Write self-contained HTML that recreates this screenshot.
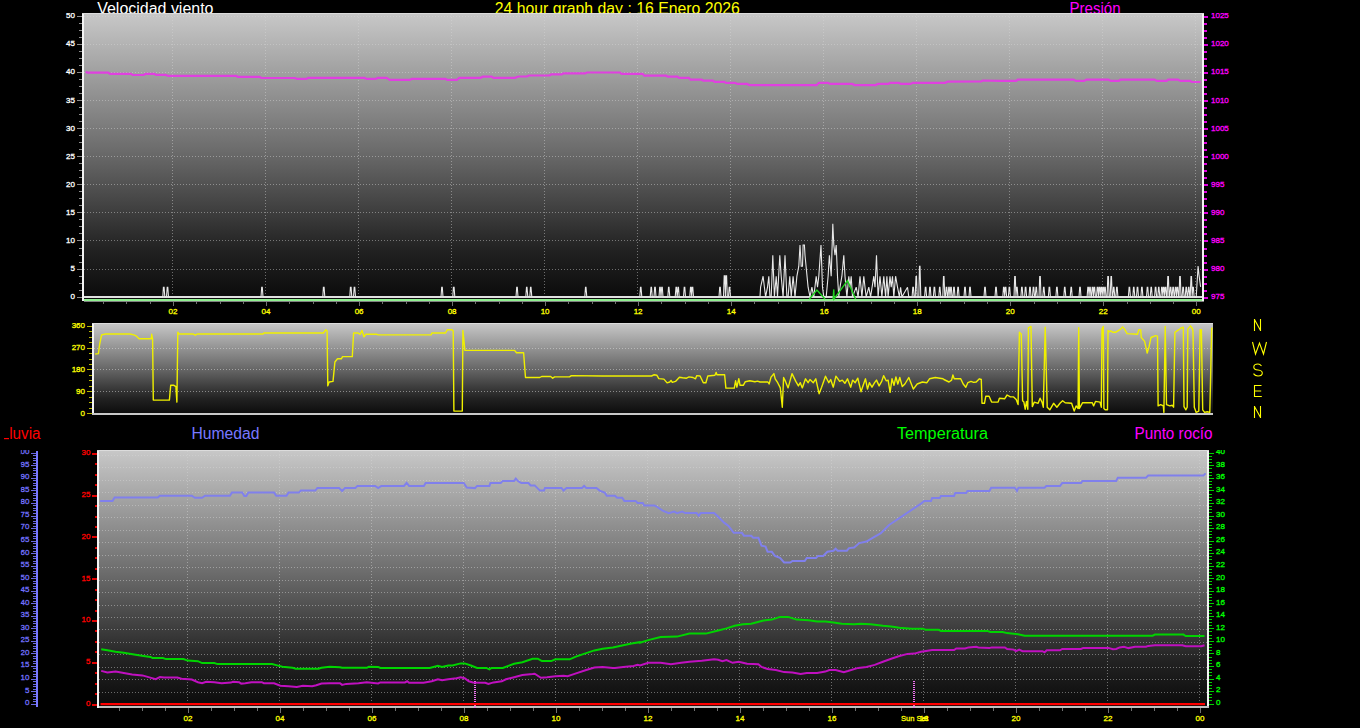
<!DOCTYPE html>
<html><head><meta charset="utf-8"><style>
html,body{margin:0;padding:0;background:#000;width:1360px;height:728px;overflow:hidden}
svg{display:block}
</style></head><body>
<svg width="1360" height="728" viewBox="0 0 1360 728">
<defs>
<linearGradient id="g1" x1="0" y1="0" x2="0" y2="1">
<stop offset="0" stop-color="#c8c8c8"/>
<stop offset="0.475" stop-color="#6c6c6c"/>
<stop offset="0.82" stop-color="#222222"/>
<stop offset="1" stop-color="#0a0a0a"/>
</linearGradient>
<clipPath id="clipB"><rect x="20.5" y="450" width="30" height="280"/></clipPath>
<clipPath id="clipT"><rect x="0" y="13" width="1360" height="300"/></clipPath>
<clipPath id="clipM"><rect x="0" y="323" width="1360" height="100"/></clipPath>
<clipPath id="clipBt"><rect x="0" y="450" width="1360" height="278"/></clipPath>
</defs>
<text x="97.2" y="13.8" fill="#ffffff" font-size="16" textLength="116.3" lengthAdjust="spacingAndGlyphs" font-family="'Liberation Sans', sans-serif" >Velocidad viento</text>
<text x="494.8" y="13.8" fill="#ffff00" font-size="16" textLength="244.99999999999994" lengthAdjust="spacingAndGlyphs" font-family="'Liberation Sans', sans-serif" >24 hour graph day : 16 Enero 2026</text>
<text x="1069.5" y="13.8" fill="#ff00ff" font-size="16" textLength="51.0" lengthAdjust="spacingAndGlyphs" font-family="'Liberation Sans', sans-serif" >Presión</text>
<rect x="82" y="13" width="1122" height="288" fill="url(#g1)"/>
<path d="M84 269.5H1202 M84 240.5H1202 M84 212.5H1202 M84 184.5H1202 M84 156.5H1202 M84 128.5H1202 M84 100.5H1202 M84 72.5H1202 M84 44.5H1202 M84 16.5H1202" stroke="#d8d8d8" stroke-width="1" stroke-dasharray="1 2" opacity="0.45" shape-rendering="crispEdges"/>
<path d="M172.5 14V298 M265.5 14V298 M358.5 14V298 M451.5 14V298 M544.5 14V298 M637.5 14V298 M730.5 14V298 M823.5 14V298 M916.5 14V298 M1009.5 14V298 M1102.5 14V298 M1195.5 14V298" stroke="#d8d8d8" stroke-width="1" stroke-dasharray="1 2" opacity="0.45" shape-rendering="crispEdges"/>
<rect x="82" y="13" width="2" height="288" fill="#f4f4f4"/>
<rect x="1202" y="13" width="2" height="288" fill="#f4f4f4"/>
<rect x="82" y="13" width="1122" height="1" fill="#dcdcdc"/>
<path d="M77 297.5H82 M79 290.5H82 M79 283.5H82 M79 276.5H82 M77 269.5H82 M79 262.5H82 M79 255.5H82 M79 248.5H82 M77 240.5H82 M79 233.5H82 M79 226.5H82 M79 219.5H82 M77 212.5H82 M79 205.5H82 M79 198.5H82 M79 191.5H82 M77 184.5H82 M79 177.5H82 M79 170.5H82 M79 163.5H82 M77 156.5H82 M79 149.5H82 M79 142.5H82 M79 135.5H82 M77 128.5H82 M79 121.5H82 M79 114.5H82 M79 107.5H82 M77 100.5H82 M79 93.5H82 M79 86.5H82 M79 79.5H82 M77 72.5H82 M79 65.5H82 M79 58.5H82 M79 51.5H82 M77 44.5H82 M79 37.5H82 M79 30.5H82 M79 23.5H82 M77 16.5H82" stroke="#8c8c8c" stroke-width="1" shape-rendering="crispEdges"/>
<path d="M1204 297.5H1208 M1204 290.5H1206.5 M1204 283.5H1206.5 M1204 276.5H1206.5 M1204 269.5H1208 M1204 262.5H1206.5 M1204 255.5H1206.5 M1204 248.5H1206.5 M1204 240.5H1208 M1204 233.5H1206.5 M1204 226.5H1206.5 M1204 219.5H1206.5 M1204 212.5H1208 M1204 205.5H1206.5 M1204 198.5H1206.5 M1204 191.5H1206.5 M1204 184.5H1208 M1204 177.5H1206.5 M1204 170.5H1206.5 M1204 163.5H1206.5 M1204 156.5H1208 M1204 149.5H1206.5 M1204 142.5H1206.5 M1204 135.5H1206.5 M1204 128.5H1208 M1204 121.5H1206.5 M1204 114.5H1206.5 M1204 107.5H1206.5 M1204 100.5H1208 M1204 93.5H1206.5 M1204 86.5H1206.5 M1204 79.5H1206.5 M1204 72.5H1208 M1204 65.5H1206.5 M1204 58.5H1206.5 M1204 51.5H1206.5 M1204 44.5H1208 M1204 37.5H1206.5 M1204 30.5H1206.5 M1204 23.5H1206.5 M1204 16.5H1208" stroke="#e000e0" stroke-width="2" shape-rendering="crispEdges"/>
<g clip-path="url(#clipT)">
<text x="75" y="299.2" fill="#ffffff" stroke="#ffffff" stroke-width="0.3" font-size="8" text-anchor="end" font-family="'Liberation Sans', sans-serif">0</text>
<text x="75" y="271.1" fill="#ffffff" stroke="#ffffff" stroke-width="0.3" font-size="8" text-anchor="end" font-family="'Liberation Sans', sans-serif">5</text>
<text x="75" y="243.0" fill="#ffffff" stroke="#ffffff" stroke-width="0.3" font-size="8" text-anchor="end" font-family="'Liberation Sans', sans-serif">10</text>
<text x="75" y="214.9" fill="#ffffff" stroke="#ffffff" stroke-width="0.3" font-size="8" text-anchor="end" font-family="'Liberation Sans', sans-serif">15</text>
<text x="75" y="186.8" fill="#ffffff" stroke="#ffffff" stroke-width="0.3" font-size="8" text-anchor="end" font-family="'Liberation Sans', sans-serif">20</text>
<text x="75" y="158.7" fill="#ffffff" stroke="#ffffff" stroke-width="0.3" font-size="8" text-anchor="end" font-family="'Liberation Sans', sans-serif">25</text>
<text x="75" y="130.6" fill="#ffffff" stroke="#ffffff" stroke-width="0.3" font-size="8" text-anchor="end" font-family="'Liberation Sans', sans-serif">30</text>
<text x="75" y="102.5" fill="#ffffff" stroke="#ffffff" stroke-width="0.3" font-size="8" text-anchor="end" font-family="'Liberation Sans', sans-serif">35</text>
<text x="75" y="74.4" fill="#ffffff" stroke="#ffffff" stroke-width="0.3" font-size="8" text-anchor="end" font-family="'Liberation Sans', sans-serif">40</text>
<text x="75" y="46.3" fill="#ffffff" stroke="#ffffff" stroke-width="0.3" font-size="8" text-anchor="end" font-family="'Liberation Sans', sans-serif">45</text>
<text x="75" y="18.2" fill="#ffffff" stroke="#ffffff" stroke-width="0.3" font-size="8" text-anchor="end" font-family="'Liberation Sans', sans-serif">50</text>
<text x="1211" y="299.2" fill="#ff00ff" stroke="#ff00ff" stroke-width="0.3" font-size="8" font-family="'Liberation Sans', sans-serif">975</text>
<text x="1211" y="271.1" fill="#ff00ff" stroke="#ff00ff" stroke-width="0.3" font-size="8" font-family="'Liberation Sans', sans-serif">980</text>
<text x="1211" y="243.0" fill="#ff00ff" stroke="#ff00ff" stroke-width="0.3" font-size="8" font-family="'Liberation Sans', sans-serif">985</text>
<text x="1211" y="214.9" fill="#ff00ff" stroke="#ff00ff" stroke-width="0.3" font-size="8" font-family="'Liberation Sans', sans-serif">990</text>
<text x="1211" y="186.8" fill="#ff00ff" stroke="#ff00ff" stroke-width="0.3" font-size="8" font-family="'Liberation Sans', sans-serif">995</text>
<text x="1211" y="158.7" fill="#ff00ff" stroke="#ff00ff" stroke-width="0.3" font-size="8" font-family="'Liberation Sans', sans-serif">1000</text>
<text x="1211" y="130.6" fill="#ff00ff" stroke="#ff00ff" stroke-width="0.3" font-size="8" font-family="'Liberation Sans', sans-serif">1005</text>
<text x="1211" y="102.5" fill="#ff00ff" stroke="#ff00ff" stroke-width="0.3" font-size="8" font-family="'Liberation Sans', sans-serif">1010</text>
<text x="1211" y="74.4" fill="#ff00ff" stroke="#ff00ff" stroke-width="0.3" font-size="8" font-family="'Liberation Sans', sans-serif">1015</text>
<text x="1211" y="46.3" fill="#ff00ff" stroke="#ff00ff" stroke-width="0.3" font-size="8" font-family="'Liberation Sans', sans-serif">1020</text>
<text x="1211" y="18.2" fill="#ff00ff" stroke="#ff00ff" stroke-width="0.3" font-size="8" font-family="'Liberation Sans', sans-serif">1025</text>
</g>
<path d="M103.5 301v3 M126.5 301v3 M150.5 301v3 M173.5 301v5 M196.5 301v3 M220.5 301v3 M243.5 301v3 M266.5 301v5 M289.5 301v3 M313.5 301v3 M336.5 301v3 M359.5 301v5 M382.5 301v3 M406.5 301v3 M429.5 301v3 M452.5 301v5 M475.5 301v3 M499.5 301v3 M522.5 301v3 M545.5 301v5 M568.5 301v3 M592.5 301v3 M615.5 301v3 M638.5 301v5 M661.5 301v3 M685.5 301v3 M708.5 301v3 M731.5 301v5 M754.5 301v3 M778.5 301v3 M801.5 301v3 M824.5 301v5 M847.5 301v3 M871.5 301v3 M894.5 301v3 M917.5 301v5 M940.5 301v3 M964.5 301v3 M987.5 301v3 M1010.5 301v5 M1034.5 301v3 M1057.5 301v3 M1080.5 301v3 M1103.5 301v5 M1127.5 301v3 M1150.5 301v3 M1173.5 301v3 M1196.5 301v5" stroke="#707070" stroke-width="1" shape-rendering="crispEdges"/>
<text x="173.0" y="314" fill="#ffff00" stroke="#ffff00" stroke-width="0.3" font-size="8" text-anchor="middle" font-family="'Liberation Sans', sans-serif">02</text>
<text x="266.0" y="314" fill="#ffff00" stroke="#ffff00" stroke-width="0.3" font-size="8" text-anchor="middle" font-family="'Liberation Sans', sans-serif">04</text>
<text x="359.1" y="314" fill="#ffff00" stroke="#ffff00" stroke-width="0.3" font-size="8" text-anchor="middle" font-family="'Liberation Sans', sans-serif">06</text>
<text x="452.1" y="314" fill="#ffff00" stroke="#ffff00" stroke-width="0.3" font-size="8" text-anchor="middle" font-family="'Liberation Sans', sans-serif">08</text>
<text x="545.1" y="314" fill="#ffff00" stroke="#ffff00" stroke-width="0.3" font-size="8" text-anchor="middle" font-family="'Liberation Sans', sans-serif">10</text>
<text x="638.1" y="314" fill="#ffff00" stroke="#ffff00" stroke-width="0.3" font-size="8" text-anchor="middle" font-family="'Liberation Sans', sans-serif">12</text>
<text x="731.2" y="314" fill="#ffff00" stroke="#ffff00" stroke-width="0.3" font-size="8" text-anchor="middle" font-family="'Liberation Sans', sans-serif">14</text>
<text x="824.2" y="314" fill="#ffff00" stroke="#ffff00" stroke-width="0.3" font-size="8" text-anchor="middle" font-family="'Liberation Sans', sans-serif">16</text>
<text x="917.2" y="314" fill="#ffff00" stroke="#ffff00" stroke-width="0.3" font-size="8" text-anchor="middle" font-family="'Liberation Sans', sans-serif">18</text>
<text x="1010.3" y="314" fill="#ffff00" stroke="#ffff00" stroke-width="0.3" font-size="8" text-anchor="middle" font-family="'Liberation Sans', sans-serif">20</text>
<text x="1103.3" y="314" fill="#ffff00" stroke="#ffff00" stroke-width="0.3" font-size="8" text-anchor="middle" font-family="'Liberation Sans', sans-serif">22</text>
<text x="1196.3" y="314" fill="#ffff00" stroke="#ffff00" stroke-width="0.3" font-size="8" text-anchor="middle" font-family="'Liberation Sans', sans-serif">00</text>
<polyline points="85.7,71.6 87.3,72.6 108.3,72.6 109.9,73.9 131.0,73.9 132.6,75.0 143.9,75.0 145.5,73.8 154.4,73.8 156.0,74.9 165.7,74.9 168.2,75.9 236.1,75.9 237.7,76.8 259.6,76.8 261.2,78.0 295.1,78.0 296.8,78.9 306.5,78.9 308.1,77.8 364.7,77.8 366.3,78.9 376.0,78.9 377.6,77.8 386.5,77.8 389.8,79.9 410.0,79.9 411.6,78.9 445.6,78.9 447.2,79.9 456.9,79.9 459.3,77.8 480.4,77.8 482.8,76.7 491.7,76.7 493.3,77.8 515.1,77.8 517.6,76.7 518.9,76.5 527.0,76.5 528.6,75.5 549.6,75.5 551.2,74.4 561.8,74.4 563.4,73.4 585.2,73.4 586.8,72.5 620.0,72.5 621.6,73.8 642.6,73.8 644.3,75.7 666.1,75.7 667.7,76.7 677.4,76.7 679.0,77.8 688.8,77.8 690.4,79.7 701.7,79.7 703.3,80.7 713.0,80.7 714.6,81.8 724.3,81.8 726.0,83.0 730.8,82.8 734.9,82.8 737.3,83.9 747.0,83.9 749.4,85.1 816.5,85.1 819.0,82.8 827.9,82.8 830.3,83.9 852.1,83.9 854.6,85.1 875.6,85.1 878.0,83.9 888.5,83.9 890.1,82.8 899.0,82.8 900.7,83.9 910.4,83.9 912.8,82.8 945.1,82.8 947.6,81.7 981.2,81.5 982.5,80.5 1000.0,80.9 1016.2,80.9 1017.8,79.6 1073.6,79.6 1076.0,80.9 1084.1,80.9 1086.5,79.6 1108.4,79.6 1110.8,80.9 1118.9,80.9 1120.5,79.6 1154.5,79.6 1156.9,80.9 1166.6,80.9 1168.2,79.6 1177.9,79.6 1180.4,80.9 1190.1,80.9 1191.7,82.0 1200.6,82.0" fill="none" stroke="#e040e0" stroke-width="2.2"/>
<rect x="84" y="299" width="1118" height="2" fill="#90f090"/>
<rect x="84" y="296" width="1118" height="2" fill="#d8d8d8"/>
<polyline points="84.0,297.0 162.8,297.0 163.4,287.3 164.1,287.3 164.8,297.0 166.5,297.0 167.2,287.3 167.8,287.3 168.5,297.0 261.0,297.0 261.7,287.3 262.3,287.3 263.0,297.0 322.8,297.0 323.4,287.3 324.1,287.3 324.8,297.0 349.8,297.0 350.4,287.3 351.1,287.3 351.8,297.0 353.5,297.0 354.2,287.3 354.8,287.3 355.5,297.0 441.0,297.0 441.7,287.3 442.3,287.3 443.0,297.0 452.8,297.0 453.4,287.3 454.1,287.3 454.8,297.0 516.0,297.0 516.7,287.3 517.3,287.3 518.0,297.0 525.8,297.0 526.5,287.3 527.0,287.3 527.8,297.0 529.8,297.0 530.5,287.3 531.0,287.3 531.8,297.0 584.8,297.0 585.5,287.3 586.0,287.3 586.8,297.0 639.8,297.0 640.5,287.3 641.0,287.3 641.8,297.0 650.2,297.0 651.0,287.3 651.5,287.3 652.2,297.0 654.0,297.0 654.7,287.3 655.3,287.3 656.0,297.0 659.0,297.0 659.7,287.3 660.3,287.3 661.0,297.0 661.0,297.0 661.7,287.3 662.3,287.3 663.0,297.0 667.8,297.0 668.5,287.3 669.0,287.3 669.8,297.0 675.2,297.0 676.0,287.3 676.5,287.3 677.2,297.0 677.2,297.0 678.0,287.3 678.5,287.3 679.2,297.0 683.5,297.0 684.2,287.3 684.8,287.3 685.5,297.0 689.8,297.0 690.5,287.3 691.0,287.3 691.8,297.0 691.5,297.0 692.2,287.3 692.8,287.3 693.5,297.0 719.0,297.0 719.7,287.3 720.3,287.3 721.0,297.0 723.5,297.0 724.2,275.8 724.8,275.8 725.5,297.0 725.3,297.0 726.0,275.8 726.6,275.8 727.3,297.0 728.5,297.0 729.2,287.3 729.8,287.3 730.5,297.0 760.0,296.9 760.6,287.2 763.1,276.2 764.4,287.2 765.6,296.9 767.5,287.2 768.8,276.2 770.0,296.9 771.2,296.9 772.8,255.2 774.4,296.9 776.2,276.2 777.5,296.9 779.8,255.2 781.2,276.2 783.1,296.9 785.0,255.2 786.9,296.9 788.1,296.9 789.8,276.2 791.2,296.9 793.1,276.2 795.0,296.9 796.9,276.2 798.8,266.2 800.0,245.0 801.2,266.2 802.5,266.2 803.1,245.0 804.4,245.0 805.0,255.2 808.1,287.2 810.0,296.9 811.9,287.2 813.8,296.9 816.2,276.2 817.5,287.2 818.8,276.2 821.0,245.0 822.5,287.2 823.8,296.9 826.2,296.9 828.1,276.2 829.4,255.2 831.2,276.2 832.8,223.8 833.8,245.0 835.0,255.2 836.2,245.0 837.5,276.2 838.8,296.9 840.0,287.2 841.9,276.2 843.8,255.2 845.0,276.2 846.9,296.9 848.8,276.2 850.0,287.2 851.2,276.2 852.5,296.9 856.2,287.2 858.1,296.9 860.0,276.2 861.9,296.9 863.8,276.2 865.0,287.2 866.2,296.9 868.8,287.2 870.6,296.9 873.8,276.2 875.0,287.2 876.5,255.2 878.1,296.9 880.0,276.2 881.9,296.9 883.8,276.2 885.6,296.9 886.9,276.2 888.1,296.9 890.0,276.2 891.2,287.2 892.5,276.2 893.8,296.9 895.6,276.2 897.5,287.2 899.4,296.9 900.6,287.2 901.9,296.9 907.5,287.2 908.8,296.9 912.1,297.0 912.8,287.2 913.4,287.2 914.1,297.0 915.2,297.0 916.0,276.6 916.5,276.6 917.2,297.0 918.8,297.0 919.5,266.3 920.0,266.3 920.8,297.0 924.6,297.0 925.3,287.2 925.9,287.2 926.6,297.0 929.0,297.0 929.7,287.2 930.3,287.2 931.0,297.0 933.4,297.0 934.1,287.2 934.7,287.2 935.4,297.0 938.8,297.0 939.5,287.2 940.0,287.2 940.8,297.0 942.8,297.0 943.5,276.6 944.0,276.6 944.8,297.0 945.5,297.0 946.2,287.2 946.8,287.2 947.5,297.0 948.0,297.0 948.7,287.2 949.3,287.2 950.0,297.0 950.0,297.0 950.7,287.2 951.3,287.2 952.0,297.0 953.0,297.0 953.7,287.2 954.3,287.2 955.0,297.0 957.1,297.0 957.8,287.2 958.4,287.2 959.1,297.0 964.0,297.0 964.7,287.2 965.3,287.2 966.0,297.0 969.0,297.0 969.7,287.2 970.3,287.2 971.0,297.0 984.0,297.0 984.7,287.2 985.3,287.2 986.0,297.0 995.0,297.0 995.7,287.2 996.3,287.2 997.0,297.0 1002.8,297.0 1003.5,287.2 1004.0,287.2 1004.8,297.0 1004.6,297.0 1005.3,287.2 1005.9,287.2 1006.6,297.0 1008.4,297.0 1009.1,287.2 1009.7,287.2 1010.4,297.0 1014.0,297.0 1014.7,276.6 1015.3,276.6 1016.0,297.0 1015.9,297.0 1016.6,287.2 1017.2,287.2 1017.9,297.0 1020.9,297.0 1021.6,287.2 1022.2,287.2 1022.9,297.0 1024.6,297.0 1025.3,287.2 1025.9,287.2 1026.6,297.0 1029.0,297.0 1029.7,287.2 1030.3,287.2 1031.0,297.0 1032.5,297.0 1033.2,287.2 1033.8,287.2 1034.5,297.0 1035.2,297.0 1036.0,287.2 1036.5,287.2 1037.2,297.0 1039.0,297.0 1039.7,276.6 1040.3,276.6 1041.0,297.0 1042.8,297.0 1043.5,287.2 1044.0,287.2 1044.8,297.0 1048.4,297.0 1049.1,287.2 1049.7,287.2 1050.4,297.0 1055.9,297.0 1056.6,287.2 1057.2,287.2 1057.9,297.0 1063.8,297.0 1064.5,287.2 1065.0,287.2 1065.8,297.0 1070.2,297.0 1071.0,287.2 1071.5,287.2 1072.2,297.0 1079.0,297.0 1079.7,287.2 1080.3,287.2 1081.0,297.0 1087.1,297.0 1087.8,287.2 1088.4,287.2 1089.1,297.0 1089.0,297.0 1089.7,287.2 1090.3,287.2 1091.0,297.0 1091.5,297.0 1092.2,287.2 1092.8,287.2 1093.5,297.0 1093.4,297.0 1094.1,287.2 1094.7,287.2 1095.4,297.0 1096.5,297.0 1097.2,287.2 1097.8,287.2 1098.5,297.0 1098.4,297.0 1099.1,287.2 1099.7,287.2 1100.4,297.0 1100.2,297.0 1101.0,287.2 1101.5,287.2 1102.2,297.0 1102.1,297.0 1102.8,287.2 1103.4,287.2 1104.1,297.0 1104.0,297.0 1104.7,287.2 1105.3,287.2 1106.0,297.0 1107.1,297.0 1107.8,276.6 1108.4,276.6 1109.1,297.0 1110.2,297.0 1111.0,276.6 1111.5,276.6 1112.2,297.0 1112.8,297.0 1113.5,287.2 1114.0,287.2 1114.8,297.0 1115.9,297.0 1116.6,287.2 1117.2,287.2 1117.9,297.0 1128.4,297.0 1129.1,287.2 1129.7,287.2 1130.4,297.0 1132.8,297.0 1133.5,287.2 1134.0,287.2 1134.8,297.0 1136.5,297.0 1137.2,287.2 1137.8,287.2 1138.5,297.0 1140.9,297.0 1141.6,287.2 1142.2,287.2 1142.9,297.0 1146.5,297.0 1147.2,287.2 1147.8,287.2 1148.5,297.0 1150.2,297.0 1151.0,287.2 1151.5,287.2 1152.2,297.0 1154.6,297.0 1155.3,287.2 1155.9,287.2 1156.6,297.0 1157.8,297.0 1158.5,287.2 1159.0,287.2 1159.8,297.0 1160.9,297.0 1161.6,287.2 1162.2,287.2 1162.9,297.0 1162.8,297.0 1163.5,287.2 1164.0,287.2 1164.8,297.0 1164.6,297.0 1165.3,287.2 1165.9,287.2 1166.6,297.0 1167.1,297.0 1167.8,276.6 1168.4,276.6 1169.1,297.0 1169.6,297.0 1170.3,287.2 1170.9,287.2 1171.6,297.0 1172.1,297.0 1172.8,287.2 1173.4,287.2 1174.1,297.0 1174.6,297.0 1175.3,287.2 1175.9,287.2 1176.6,297.0 1176.5,297.0 1177.2,287.2 1177.8,287.2 1178.5,297.0 1179.0,297.0 1179.7,276.6 1180.3,276.6 1181.0,297.0 1182.1,297.0 1182.8,287.2 1183.4,287.2 1184.1,297.0 1185.2,297.0 1186.0,287.2 1186.5,287.2 1187.2,297.0 1187.8,297.0 1188.5,287.2 1189.0,287.2 1189.8,297.0 1190.2,297.0 1191.0,276.6 1191.5,276.6 1192.2,297.0 1192.1,297.0 1192.8,287.2 1193.4,287.2 1194.1,297.0 1196.2,297.2 1198.1,266.0 1199.0,275.0 1200.6,286.9" fill="none" stroke="#e8e8e8" stroke-width="1.1" stroke-linejoin="miter" stroke-miterlimit="2"/>
<polyline points="809.4,299.0 816.9,290.0 825.0,299.0" fill="none" stroke="#20d020" stroke-width="1.4"/>
<polyline points="833.1,299.0 833.8,289.4 834.0,299.0 847.5,280.6 855.6,299.0" fill="none" stroke="#20d020" stroke-width="1.4"/>
<rect x="84" y="301" width="1120" height="1" fill="#808080"/>
<rect x="92" y="323" width="1121" height="92" fill="url(#g1)"/>
<path d="M94 391.5H1213 M94 369.5H1213 M94 348.5H1213" stroke="#e0e0e0" stroke-width="1" stroke-dasharray="1 2" opacity="0.5" shape-rendering="crispEdges"/>
<rect x="92" y="323" width="2" height="92" fill="#f4f4f4"/>
<rect x="92" y="323" width="1121" height="1" fill="#dcdcdc"/>
<rect x="92" y="413" width="1121" height="2" fill="#c8c8c8"/>
<path d="M87 413.5H92 M89 408.5H92 M89 402.5H92 M89 397.5H92 M87 391.5H92 M89 386.5H92 M89 380.5H92 M89 375.5H92 M87 369.5H92 M89 364.5H92 M89 359.5H92 M89 353.5H92 M87 348.5H92 M89 342.5H92 M89 337.5H92 M89 331.5H92 M87 326.5H92" stroke="#b8b800" stroke-width="1.5" shape-rendering="crispEdges"/>
<g clip-path="url(#clipM)">
<text x="85" y="415.6" fill="#ffff00" stroke="#ffff00" stroke-width="0.3" font-size="8" text-anchor="end" font-family="'Liberation Sans', sans-serif">0</text>
<text x="85" y="393.8" fill="#ffff00" stroke="#ffff00" stroke-width="0.3" font-size="8" text-anchor="end" font-family="'Liberation Sans', sans-serif">90</text>
<text x="85" y="372.0" fill="#ffff00" stroke="#ffff00" stroke-width="0.3" font-size="8" text-anchor="end" font-family="'Liberation Sans', sans-serif">180</text>
<text x="85" y="350.1" fill="#ffff00" stroke="#ffff00" stroke-width="0.3" font-size="8" text-anchor="end" font-family="'Liberation Sans', sans-serif">270</text>
<text x="85" y="328.3" fill="#ffff00" stroke="#ffff00" stroke-width="0.3" font-size="8" text-anchor="end" font-family="'Liberation Sans', sans-serif">360</text>
</g>
<polyline points="95.2,354.0 98.4,353.6 99.7,344.0 101.6,334.9 105.5,334.0 130.0,334.0 133.9,334.9 136.5,336.2 139.1,338.8 151.3,338.8 151.7,334.3 152.6,338.8 153.3,400.1 169.4,400.1 170.7,385.3 173.9,385.3 175.9,386.6 176.9,402.1 177.8,332.3 179.1,334.0 193.3,334.0 195.2,335.2 197.2,334.0 263.0,334.0 263.9,333.0 323.3,333.0 325.9,329.7 327.1,331.0 327.8,385.9 329.1,382.0 333.0,381.4 334.9,362.0 337.5,358.8 341.3,358.8 342.6,356.6 352.3,356.6 353.6,333.0 358.1,333.0 360.1,334.3 362.0,330.4 363.9,336.8 365.9,334.3 376.9,334.3 378.1,334.9 431.1,334.9 431.9,333.0 445.5,333.0 447.4,329.7 452.0,329.7 453.2,331.0 453.9,411.1 462.3,411.1 462.9,330.4 464.9,350.4 514.6,350.4 516.5,352.7 523.6,352.7 525.5,377.5 539.8,377.5 541.7,376.5 550.7,376.5 552.7,378.2 554.6,376.9 569.5,376.9 571.4,375.6 602.6,376.0 651.6,376.0 654.2,374.7 656.8,375.2 658.8,378.6 663.9,379.1 667.1,382.9 669.7,382.0 671.0,380.4 672.3,382.4 675.5,381.4 679.4,377.3 682.6,377.8 686.5,378.2 689.1,376.9 693.0,377.5 695.5,378.8 696.8,375.6 700.1,376.0 703.3,382.7 705.9,382.7 707.8,376.0 714.9,375.2 716.2,372.4 716.9,374.7 724.6,374.7 725.9,388.1 734.3,388.1 735.6,380.8 736.9,387.2 738.8,378.6 740.1,385.3 743.3,385.3 745.3,381.7 749.8,380.8 754.9,381.7 757.5,381.1 760.1,382.0 767.9,382.0 769.1,384.0 771.1,376.9 771.3,376.9 773.9,373.6 775.2,378.8 777.7,382.7 780.3,387.9 782.3,407.2 783.6,377.5 785.5,381.4 788.1,387.9 792.0,373.6 795.8,381.4 798.4,385.9 800.3,382.7 802.3,387.9 805.5,378.8 808.1,382.7 810.0,379.5 813.3,382.7 815.8,378.8 819.1,393.7 821.6,387.2 825.5,376.2 828.8,382.7 830.7,379.5 833.3,387.2 835.9,376.2 839.7,381.4 842.3,380.1 844.9,383.3 847.5,378.8 850.7,387.2 852.6,380.1 855.2,382.7 857.8,378.2 861.0,391.7 863.6,384.0 865.5,378.8 867.5,389.1 869.4,382.7 872.0,387.2 874.6,382.7 876.5,380.1 879.1,385.9 881.7,381.4 883.6,375.6 886.2,380.8 888.1,380.1 890.1,392.4 892.0,378.8 894.0,385.3 895.9,376.9 897.8,384.0 899.8,377.5 902.3,386.6 904.9,384.0 908.8,377.5 913.3,389.1 917.2,384.0 922.4,382.0 926.9,382.7 929.5,378.8 935.3,377.5 943.0,378.8 943.9,379.5 949.0,382.0 951.6,380.1 952.9,374.9 954.2,378.8 960.7,378.8 963.2,384.0 965.8,387.2 967.8,382.7 971.0,381.4 973.6,382.4 976.2,382.0 979.4,378.8 981.3,379.5 982.0,403.3 984.5,403.3 985.8,396.2 989.1,396.2 991.6,402.1 998.1,402.1 999.4,398.2 1004.6,398.8 1007.1,395.0 1010.4,396.9 1013.6,396.9 1016.2,399.5 1018.1,404.6 1019.4,332.3 1021.3,334.3 1022.6,400.8 1023.9,402.1 1025.2,409.2 1026.5,401.4 1027.8,409.2 1028.4,327.8 1031.0,326.5 1032.3,406.6 1034.3,402.1 1038.1,403.3 1040.1,398.2 1042.0,402.1 1043.3,407.2 1045.2,327.2 1047.2,407.2 1049.8,409.8 1053.6,403.3 1056.9,407.2 1060.0,403.3 1062.6,400.8 1065.2,402.7 1071.6,403.3 1074.2,411.1 1076.1,405.9 1078.1,408.5 1078.7,327.8 1079.4,408.5 1082.6,402.7 1092.3,402.7 1093.6,405.9 1095.5,401.4 1100.0,402.1 1101.3,407.2 1102.0,329.1 1103.3,326.5 1103.9,408.5 1105.2,409.8 1107.5,409.8 1108.0,330.4 1109.1,331.7 1111.0,331.0 1112.9,332.3 1115.5,332.3 1120.7,329.1 1122.6,326.9 1124.6,329.1 1127.1,333.6 1137.5,334.3 1138.8,329.7 1140.7,329.7 1141.3,337.5 1144.6,341.4 1147.2,353.0 1149.1,346.5 1151.0,337.5 1155.5,335.6 1157.5,336.2 1158.1,405.9 1160.7,404.6 1163.3,405.9 1163.9,412.4 1165.2,326.5 1166.5,404.6 1169.8,405.9 1172.3,405.3 1173.6,407.2 1174.9,332.3 1178.8,329.7 1181.4,327.8 1183.3,327.2 1184.0,406.6 1185.9,409.8 1187.2,407.2 1187.8,329.1 1190.4,325.9 1192.3,328.5 1193.0,331.0 1194.3,407.2 1196.2,412.4 1198.8,411.1 1200.1,329.7 1201.4,329.7 1202.7,409.8 1204.6,412.4 1207.2,411.7 1209.8,412.4 1211.7,328.5 1212.4,327.8" fill="none" stroke="#f0f000" stroke-width="1.4" stroke-linejoin="round"/>
<path d="M1254.5 331V319 M1254.5 319.5 L1260.5 330.5 M1260.5 331V319 M1252.5 342 L1255.5 354 L1259.5 343 L1263.5 354 L1266.5 342 M1261.5 366 Q1260 364 1258 364 Q1253.8 364 1253.8 367 Q1253.8 369.6 1258 370 Q1262.3 370.5 1262.3 373 Q1262.3 376 1258 376 Q1255 376 1253.5 373.6 M1261.5 385.5H1254.5V396.5H1261.8 M1254.5 391H1261.2 M1254.5 418V406 M1254.5 406.5 L1260.5 417.5 M1260.5 418V406" stroke="#ffff00" stroke-width="1.1" fill="none"/>
<rect x="97" y="450" width="1112" height="258" fill="url(#g1)"/>
<path d="M99 692.5H1207 M99 679.5H1207 M99 667.5H1207 M99 654.5H1207 M99 642.5H1207 M99 629.5H1207 M99 617.5H1207 M99 605.5H1207 M99 592.5H1207 M99 580.5H1207 M99 567.5H1207 M99 555.5H1207 M99 542.5H1207 M99 530.5H1207 M99 517.5H1207 M99 505.5H1207 M99 492.5H1207 M99 480.5H1207 M99 467.5H1207 M99 455.5H1207" stroke="#d8d8d8" stroke-width="1" stroke-dasharray="1 2" opacity="0.45" shape-rendering="crispEdges"/>
<path d="M187.5 451V705 M279.5 451V705 M371.5 451V705 M463.5 451V705 M555.5 451V705 M647.5 451V705 M739.5 451V705 M831.5 451V705 M923.5 451V705 M1015.5 451V705 M1107.5 451V705 M1199.5 451V705" stroke="#d8d8d8" stroke-width="1" stroke-dasharray="1 2" opacity="0.45" shape-rendering="crispEdges"/>
<rect x="97" y="450" width="2" height="258" fill="#f4f4f4"/>
<rect x="1207" y="450" width="2" height="258" fill="#f4f4f4"/>
<rect x="97" y="450" width="1112" height="1" fill="#dcdcdc"/>
<rect x="99" y="706" width="1110" height="2" fill="#c0c0c0"/>
<rect x="36" y="451" width="2" height="256" fill="#7878ff"/>
<path d="M31 704.5H36 M33 701.5H36 M33 699.5H36 M33 696.5H36 M33 694.5H36 M31 691.5H36 M33 689.5H36 M33 686.5H36 M33 684.5H36 M33 681.5H36 M31 679.5H36 M33 676.5H36 M33 674.5H36 M33 671.5H36 M33 668.5H36 M31 666.5H36 M33 663.5H36 M33 661.5H36 M33 658.5H36 M33 656.5H36 M31 653.5H36 M33 651.5H36 M33 648.5H36 M33 646.5H36 M33 643.5H36 M31 641.5H36 M33 638.5H36 M33 636.5H36 M33 633.5H36 M33 631.5H36 M31 628.5H36 M33 626.5H36 M33 623.5H36 M33 621.5H36 M33 618.5H36 M31 616.5H36 M33 613.5H36 M33 611.5H36 M33 608.5H36 M33 606.5H36 M31 603.5H36 M33 601.5H36 M33 598.5H36 M33 596.5H36 M33 593.5H36 M31 591.5H36 M33 588.5H36 M33 586.5H36 M33 583.5H36 M33 581.5H36 M31 578.5H36 M33 576.5H36 M33 573.5H36 M33 571.5H36 M33 568.5H36 M31 566.5H36 M33 563.5H36 M33 561.5H36 M33 558.5H36 M33 556.5H36 M31 553.5H36 M33 551.5H36 M33 548.5H36 M33 546.5H36 M33 543.5H36 M31 541.5H36 M33 538.5H36 M33 536.5H36 M33 533.5H36 M33 531.5H36 M31 528.5H36 M33 526.5H36 M33 523.5H36 M33 521.5H36 M33 518.5H36 M31 516.5H36 M33 513.5H36 M33 510.5H36 M33 508.5H36 M33 505.5H36 M31 503.5H36 M33 500.5H36 M33 498.5H36 M33 495.5H36 M33 493.5H36 M31 490.5H36 M33 488.5H36 M33 485.5H36 M33 483.5H36 M33 480.5H36 M31 478.5H36 M33 475.5H36 M33 473.5H36 M33 470.5H36 M33 468.5H36 M31 465.5H36 M33 463.5H36 M33 460.5H36 M33 458.5H36 M33 455.5H36 M31 453.5H36" stroke="#6868e0" stroke-width="1" shape-rendering="crispEdges"/>
<g clip-path="url(#clipB)">
<text x="29.5" y="705.0" fill="#7070ff" stroke="#7070ff" stroke-width="0.3" font-size="8" text-anchor="end" font-family="'Liberation Sans', sans-serif">0</text>
<text x="29.5" y="692.5" fill="#7070ff" stroke="#7070ff" stroke-width="0.3" font-size="8" text-anchor="end" font-family="'Liberation Sans', sans-serif">5</text>
<text x="29.5" y="679.9" fill="#7070ff" stroke="#7070ff" stroke-width="0.3" font-size="8" text-anchor="end" font-family="'Liberation Sans', sans-serif">10</text>
<text x="29.5" y="667.4" fill="#7070ff" stroke="#7070ff" stroke-width="0.3" font-size="8" text-anchor="end" font-family="'Liberation Sans', sans-serif">15</text>
<text x="29.5" y="654.8" fill="#7070ff" stroke="#7070ff" stroke-width="0.3" font-size="8" text-anchor="end" font-family="'Liberation Sans', sans-serif">20</text>
<text x="29.5" y="642.3" fill="#7070ff" stroke="#7070ff" stroke-width="0.3" font-size="8" text-anchor="end" font-family="'Liberation Sans', sans-serif">25</text>
<text x="29.5" y="629.8" fill="#7070ff" stroke="#7070ff" stroke-width="0.3" font-size="8" text-anchor="end" font-family="'Liberation Sans', sans-serif">30</text>
<text x="29.5" y="617.2" fill="#7070ff" stroke="#7070ff" stroke-width="0.3" font-size="8" text-anchor="end" font-family="'Liberation Sans', sans-serif">35</text>
<text x="29.5" y="604.7" fill="#7070ff" stroke="#7070ff" stroke-width="0.3" font-size="8" text-anchor="end" font-family="'Liberation Sans', sans-serif">40</text>
<text x="29.5" y="592.1" fill="#7070ff" stroke="#7070ff" stroke-width="0.3" font-size="8" text-anchor="end" font-family="'Liberation Sans', sans-serif">45</text>
<text x="29.5" y="579.6" fill="#7070ff" stroke="#7070ff" stroke-width="0.3" font-size="8" text-anchor="end" font-family="'Liberation Sans', sans-serif">50</text>
<text x="29.5" y="567.1" fill="#7070ff" stroke="#7070ff" stroke-width="0.3" font-size="8" text-anchor="end" font-family="'Liberation Sans', sans-serif">55</text>
<text x="29.5" y="554.5" fill="#7070ff" stroke="#7070ff" stroke-width="0.3" font-size="8" text-anchor="end" font-family="'Liberation Sans', sans-serif">60</text>
<text x="29.5" y="542.0" fill="#7070ff" stroke="#7070ff" stroke-width="0.3" font-size="8" text-anchor="end" font-family="'Liberation Sans', sans-serif">65</text>
<text x="29.5" y="529.4" fill="#7070ff" stroke="#7070ff" stroke-width="0.3" font-size="8" text-anchor="end" font-family="'Liberation Sans', sans-serif">70</text>
<text x="29.5" y="516.9" fill="#7070ff" stroke="#7070ff" stroke-width="0.3" font-size="8" text-anchor="end" font-family="'Liberation Sans', sans-serif">75</text>
<text x="29.5" y="504.4" fill="#7070ff" stroke="#7070ff" stroke-width="0.3" font-size="8" text-anchor="end" font-family="'Liberation Sans', sans-serif">80</text>
<text x="29.5" y="491.8" fill="#7070ff" stroke="#7070ff" stroke-width="0.3" font-size="8" text-anchor="end" font-family="'Liberation Sans', sans-serif">85</text>
<text x="29.5" y="479.3" fill="#7070ff" stroke="#7070ff" stroke-width="0.3" font-size="8" text-anchor="end" font-family="'Liberation Sans', sans-serif">90</text>
<text x="29.5" y="466.7" fill="#7070ff" stroke="#7070ff" stroke-width="0.3" font-size="8" text-anchor="end" font-family="'Liberation Sans', sans-serif">95</text>
<text x="29.5" y="454.2" fill="#7070ff" stroke="#7070ff" stroke-width="0.3" font-size="8" text-anchor="end" font-family="'Liberation Sans', sans-serif">100</text>
</g>
<path d="M92 704.5H97 M95 693.5H97 M95 683.5H97 M95 672.5H97 M92 662.5H97 M95 651.5H97 M95 641.5H97 M95 630.5H97 M92 620.5H97 M95 610.5H97 M95 599.5H97 M95 589.5H97 M92 578.5H97 M95 568.5H97 M95 557.5H97 M95 547.5H97 M92 536.5H97 M95 526.5H97 M95 516.5H97 M95 505.5H97 M92 495.5H97 M95 484.5H97 M95 474.5H97 M95 463.5H97 M92 453.5H97" stroke="#e00000" stroke-width="2" shape-rendering="crispEdges"/>
<g clip-path="url(#clipBt)">
<text x="90.5" y="705.9" fill="#ff0000" stroke="#ff0000" stroke-width="0.3" font-size="8" text-anchor="end" font-family="'Liberation Sans', sans-serif">0</text>
<text x="90.5" y="664.1" fill="#ff0000" stroke="#ff0000" stroke-width="0.3" font-size="8" text-anchor="end" font-family="'Liberation Sans', sans-serif">5</text>
<text x="90.5" y="622.3" fill="#ff0000" stroke="#ff0000" stroke-width="0.3" font-size="8" text-anchor="end" font-family="'Liberation Sans', sans-serif">10</text>
<text x="90.5" y="580.5" fill="#ff0000" stroke="#ff0000" stroke-width="0.3" font-size="8" text-anchor="end" font-family="'Liberation Sans', sans-serif">15</text>
<text x="90.5" y="538.7" fill="#ff0000" stroke="#ff0000" stroke-width="0.3" font-size="8" text-anchor="end" font-family="'Liberation Sans', sans-serif">20</text>
<text x="90.5" y="496.9" fill="#ff0000" stroke="#ff0000" stroke-width="0.3" font-size="8" text-anchor="end" font-family="'Liberation Sans', sans-serif">25</text>
<text x="90.5" y="455.1" fill="#ff0000" stroke="#ff0000" stroke-width="0.3" font-size="8" text-anchor="end" font-family="'Liberation Sans', sans-serif">30</text>
<path d="M1209 704.5h4.5 M1209 700.5h2.5 M1209 697.5h2.5 M1209 694.5h2.5 M1209 691.5h4.5 M1209 688.5h2.5 M1209 685.5h2.5 M1209 682.5h2.5 M1209 679.5h4.5 M1209 675.5h2.5 M1209 672.5h2.5 M1209 669.5h2.5 M1209 666.5h4.5 M1209 663.5h2.5 M1209 660.5h2.5 M1209 657.5h2.5 M1209 653.5h4.5 M1209 650.5h2.5 M1209 647.5h2.5 M1209 644.5h2.5 M1209 641.5h4.5 M1209 638.5h2.5 M1209 635.5h2.5 M1209 631.5h2.5 M1209 628.5h4.5 M1209 625.5h2.5 M1209 622.5h2.5 M1209 619.5h2.5 M1209 616.5h4.5 M1209 613.5h2.5 M1209 610.5h2.5 M1209 606.5h2.5 M1209 603.5h4.5 M1209 600.5h2.5 M1209 597.5h2.5 M1209 594.5h2.5 M1209 591.5h4.5 M1209 588.5h2.5 M1209 584.5h2.5 M1209 581.5h2.5 M1209 578.5h4.5 M1209 575.5h2.5 M1209 572.5h2.5 M1209 569.5h2.5 M1209 566.5h4.5 M1209 563.5h2.5 M1209 559.5h2.5 M1209 556.5h2.5 M1209 553.5h4.5 M1209 550.5h2.5 M1209 547.5h2.5 M1209 544.5h2.5 M1209 541.5h4.5 M1209 537.5h2.5 M1209 534.5h2.5 M1209 531.5h2.5 M1209 528.5h4.5 M1209 525.5h2.5 M1209 522.5h2.5 M1209 519.5h2.5 M1209 516.5h4.5 M1209 512.5h2.5 M1209 509.5h2.5 M1209 506.5h2.5 M1209 503.5h4.5 M1209 500.5h2.5 M1209 497.5h2.5 M1209 494.5h2.5 M1209 490.5h4.5 M1209 487.5h2.5 M1209 484.5h2.5 M1209 481.5h2.5 M1209 478.5h4.5 M1209 475.5h2.5 M1209 472.5h2.5 M1209 468.5h2.5 M1209 465.5h4.5 M1209 462.5h2.5 M1209 459.5h2.5 M1209 456.5h2.5 M1209 453.5h4.5" stroke="#00d000" stroke-width="1.5" shape-rendering="crispEdges"/>
<text x="1216" y="704.9" fill="#00ff00" stroke="#00ff00" stroke-width="0.3" font-size="8" font-family="'Liberation Sans', sans-serif">0</text>
<text x="1216" y="692.4" fill="#00ff00" stroke="#00ff00" stroke-width="0.3" font-size="8" font-family="'Liberation Sans', sans-serif">2</text>
<text x="1216" y="679.8" fill="#00ff00" stroke="#00ff00" stroke-width="0.3" font-size="8" font-family="'Liberation Sans', sans-serif">4</text>
<text x="1216" y="667.3" fill="#00ff00" stroke="#00ff00" stroke-width="0.3" font-size="8" font-family="'Liberation Sans', sans-serif">6</text>
<text x="1216" y="654.7" fill="#00ff00" stroke="#00ff00" stroke-width="0.3" font-size="8" font-family="'Liberation Sans', sans-serif">8</text>
<text x="1216" y="642.2" fill="#00ff00" stroke="#00ff00" stroke-width="0.3" font-size="8" font-family="'Liberation Sans', sans-serif">10</text>
<text x="1216" y="629.7" fill="#00ff00" stroke="#00ff00" stroke-width="0.3" font-size="8" font-family="'Liberation Sans', sans-serif">12</text>
<text x="1216" y="617.1" fill="#00ff00" stroke="#00ff00" stroke-width="0.3" font-size="8" font-family="'Liberation Sans', sans-serif">14</text>
<text x="1216" y="604.6" fill="#00ff00" stroke="#00ff00" stroke-width="0.3" font-size="8" font-family="'Liberation Sans', sans-serif">16</text>
<text x="1216" y="592.0" fill="#00ff00" stroke="#00ff00" stroke-width="0.3" font-size="8" font-family="'Liberation Sans', sans-serif">18</text>
<text x="1216" y="579.5" fill="#00ff00" stroke="#00ff00" stroke-width="0.3" font-size="8" font-family="'Liberation Sans', sans-serif">20</text>
<text x="1216" y="567.0" fill="#00ff00" stroke="#00ff00" stroke-width="0.3" font-size="8" font-family="'Liberation Sans', sans-serif">22</text>
<text x="1216" y="554.4" fill="#00ff00" stroke="#00ff00" stroke-width="0.3" font-size="8" font-family="'Liberation Sans', sans-serif">24</text>
<text x="1216" y="541.9" fill="#00ff00" stroke="#00ff00" stroke-width="0.3" font-size="8" font-family="'Liberation Sans', sans-serif">26</text>
<text x="1216" y="529.3" fill="#00ff00" stroke="#00ff00" stroke-width="0.3" font-size="8" font-family="'Liberation Sans', sans-serif">28</text>
<text x="1216" y="516.8" fill="#00ff00" stroke="#00ff00" stroke-width="0.3" font-size="8" font-family="'Liberation Sans', sans-serif">30</text>
<text x="1216" y="504.3" fill="#00ff00" stroke="#00ff00" stroke-width="0.3" font-size="8" font-family="'Liberation Sans', sans-serif">32</text>
<text x="1216" y="491.7" fill="#00ff00" stroke="#00ff00" stroke-width="0.3" font-size="8" font-family="'Liberation Sans', sans-serif">34</text>
<text x="1216" y="479.2" fill="#00ff00" stroke="#00ff00" stroke-width="0.3" font-size="8" font-family="'Liberation Sans', sans-serif">36</text>
<text x="1216" y="466.6" fill="#00ff00" stroke="#00ff00" stroke-width="0.3" font-size="8" font-family="'Liberation Sans', sans-serif">38</text>
<text x="1216" y="454.1" fill="#00ff00" stroke="#00ff00" stroke-width="0.3" font-size="8" font-family="'Liberation Sans', sans-serif">40</text>
</g>
<path d="M119.5 708v3 M142.5 708v3 M165.5 708v3 M188.5 708v5 M211.5 708v3 M234.5 708v3 M257.5 708v3 M280.5 708v5 M303.5 708v3 M326.5 708v3 M349.5 708v3 M372.5 708v5 M395.5 708v3 M418.5 708v3 M441.5 708v3 M464.5 708v5 M487.5 708v3 M510.5 708v3 M533.5 708v3 M556.5 708v5 M579.5 708v3 M602.5 708v3 M625.5 708v3 M648.5 708v5 M671.5 708v3 M694.5 708v3 M717.5 708v3 M740.5 708v5 M763.5 708v3 M786.5 708v3 M809.5 708v3 M832.5 708v5 M855.5 708v3 M878.5 708v3 M901.5 708v3 M924.5 708v5 M947.5 708v3 M970.5 708v3 M993.5 708v3 M1016.5 708v5 M1039.5 708v3 M1062.5 708v3 M1085.5 708v3 M1108.5 708v5 M1131.5 708v3 M1154.5 708v3 M1177.5 708v3 M1200.5 708v5" stroke="#707070" stroke-width="1" shape-rendering="crispEdges"/>
<text x="188" y="721" fill="#ffff00" stroke="#ffff00" stroke-width="0.3" font-size="8" text-anchor="middle" font-family="'Liberation Sans', sans-serif">02</text>
<text x="280" y="721" fill="#ffff00" stroke="#ffff00" stroke-width="0.3" font-size="8" text-anchor="middle" font-family="'Liberation Sans', sans-serif">04</text>
<text x="372" y="721" fill="#ffff00" stroke="#ffff00" stroke-width="0.3" font-size="8" text-anchor="middle" font-family="'Liberation Sans', sans-serif">06</text>
<text x="464" y="721" fill="#ffff00" stroke="#ffff00" stroke-width="0.3" font-size="8" text-anchor="middle" font-family="'Liberation Sans', sans-serif">08</text>
<text x="556" y="721" fill="#ffff00" stroke="#ffff00" stroke-width="0.3" font-size="8" text-anchor="middle" font-family="'Liberation Sans', sans-serif">10</text>
<text x="648" y="721" fill="#ffff00" stroke="#ffff00" stroke-width="0.3" font-size="8" text-anchor="middle" font-family="'Liberation Sans', sans-serif">12</text>
<text x="740" y="721" fill="#ffff00" stroke="#ffff00" stroke-width="0.3" font-size="8" text-anchor="middle" font-family="'Liberation Sans', sans-serif">14</text>
<text x="832" y="721" fill="#ffff00" stroke="#ffff00" stroke-width="0.3" font-size="8" text-anchor="middle" font-family="'Liberation Sans', sans-serif">16</text>
<text x="924" y="721" fill="#ffff00" stroke="#ffff00" stroke-width="0.3" font-size="8" text-anchor="middle" font-family="'Liberation Sans', sans-serif">18</text>
<text x="1016" y="721" fill="#ffff00" stroke="#ffff00" stroke-width="0.3" font-size="8" text-anchor="middle" font-family="'Liberation Sans', sans-serif">20</text>
<text x="1108" y="721" fill="#ffff00" stroke="#ffff00" stroke-width="0.3" font-size="8" text-anchor="middle" font-family="'Liberation Sans', sans-serif">22</text>
<text x="1200" y="721" fill="#ffff00" stroke="#ffff00" stroke-width="0.3" font-size="8" text-anchor="middle" font-family="'Liberation Sans', sans-serif">00</text>
<text x="901" y="721" fill="#ffff00" stroke="#ffff00" stroke-width="0.3" font-size="8" textLength="27" lengthAdjust="spacingAndGlyphs" font-family="'Liberation Sans', sans-serif">Sun Set</text>
<path d="M474.5 681V708M913.5 681V708" stroke="#f070f0" stroke-width="2" stroke-dasharray="1 1" shape-rendering="crispEdges"/>
<polyline points="100.1,500.9 112.5,500.9 114.6,497.4 157.8,497.4 159.9,495.7 191.8,495.7 194.9,497.8 202.1,497.8 205.1,495.7 229.9,495.7 231.9,492.6 242.2,492.6 244.3,496.1 246.3,496.1 248.4,492.6 274.1,492.6 276.2,495.7 286.5,495.7 288.5,492.6 298.8,492.6 300.9,490.6 315.3,490.6 317.4,487.9 339.0,487.9 342.1,491.0 345.1,487.9 355.4,487.9 357.5,485.9 375.1,485.9 378.2,488.1 381.3,485.9 404.0,485.9 406.6,482.8 409.1,485.9 423.9,485.9 425.6,483.0 463.7,483.0 466.8,487.5 475.0,488.1 477.1,485.9 489.4,485.9 490.4,483.0 500.7,483.0 502.8,480.9 514.1,480.9 515.8,478.6 518.2,481.3 521.3,483.0 528.5,483.0 530.6,485.4 534.7,485.4 539.9,490.6 544.0,490.6 545.0,487.9 561.5,487.9 563.5,490.6 566.6,487.9 582.1,487.9 584.1,485.9 586.2,487.9 596.5,487.9 599.6,490.6 604.7,492.6 606.8,495.7 615.0,495.7 617.1,497.8 622.2,497.8 624.3,500.9 635.6,500.9 637.6,502.9 642.8,502.9 644.1,505.4 654.4,505.4 656.5,506.5 662.6,510.6 668.8,513.1 674.0,511.6 677.1,513.1 682.2,511.6 685.3,513.1 696.6,513.1 698.7,515.7 700.7,513.1 714.1,513.1 718.2,516.8 724.4,522.9 728.5,526.0 733.7,532.8 741.9,532.8 744.0,535.7 751.2,535.7 753.2,537.8 758.4,537.8 761.5,545.6 765.6,546.6 767.6,551.8 771.8,551.8 774.9,555.9 780.0,557.9 784.1,562.5 790.3,562.5 792.4,561.0 804.7,561.0 806.8,557.9 816.0,557.9 818.1,555.9 823.2,555.9 827.4,551.8 833.5,550.7 835.6,548.7 837.6,550.7 846.9,550.7 849.0,548.1 854.1,547.6 859.3,543.1 866.5,541.5 872.6,537.8 880.9,533.2 889.1,525.0 921.0,503.6 924.3,501.0 931.0,501.0 932.1,498.1 939.8,498.1 940.9,495.9 954.1,495.9 955.2,493.0 966.2,493.0 967.4,491.0 989.4,491.0 991.2,487.7 1014.8,487.7 1017.0,491.0 1018.5,487.7 1044.6,487.7 1046.3,486.0 1060.0,486.0 1062.2,483.1 1081.0,483.1 1082.5,480.9 1116.2,480.9 1117.8,477.8 1146.0,477.8 1148.2,475.6 1203.4,475.6 1205.6,473.4" fill="none" stroke="#8080ec" stroke-width="2"/>
<polyline points="101.2,649.3 107.4,650.3 115.6,651.7 123.8,652.8 134.1,654.4 143.4,655.9 150.6,656.9 152.6,658.1 162.9,658.1 166.0,659.1 183.5,659.1 187.6,660.6 197.9,661.2 202.1,663.1 214.4,663.1 217.5,664.1 272.1,664.1 276.2,665.1 282.4,666.8 292.6,667.8 295.7,668.8 318.4,668.8 321.5,667.8 329.7,666.8 340.0,667.2 342.1,667.8 366.8,667.8 368.8,666.8 378.2,666.9 380.3,667.9 429.7,667.9 437.9,665.9 442.1,666.9 448.2,665.5 452.4,665.5 460.6,663.4 464.7,663.4 470.9,665.5 477.1,667.9 486.3,667.9 489.4,669.4 491.5,667.9 502.8,667.9 514.1,663.8 522.4,662.2 532.6,658.7 537.8,658.7 541.9,661.1 551.2,661.1 555.3,659.3 569.7,659.3 575.9,656.6 586.2,653.1 594.4,650.4 602.6,648.8 612.9,647.4 623.2,645.3 631.5,643.6 639.7,642.2 640.0,642.8 648.2,640.1 660.6,637.1 677.1,636.6 689.4,633.6 705.9,633.6 718.2,630.5 726.5,628.4 734.7,625.7 742.9,624.3 751.2,623.7 763.5,620.6 771.8,619.6 780.0,616.9 788.2,616.9 796.5,619.6 808.8,620.2 817.1,621.6 825.3,621.6 833.5,622.6 841.8,623.7 854.1,624.3 860.3,623.7 870.6,624.3 882.9,625.7 891.2,626.4 899.4,627.8 911.8,628.8 912.2,628.7 923.2,628.7 925.4,629.8 938.7,629.8 940.9,630.9 987.2,630.9 990.5,632.0 1002.6,632.0 1007.1,633.1 1018.1,634.2 1024.7,635.7 1152.6,635.7 1154.9,634.6 1183.5,634.6 1185.7,636.0 1204.5,636.0" fill="none" stroke="#00d400" stroke-width="2"/>
<polyline points="101.2,670.9 107.4,672.5 115.6,671.5 123.8,672.9 132.1,674.6 142.4,675.4 148.5,677.1 155.7,679.1 159.9,677.1 164.0,677.5 177.4,677.5 181.5,678.7 191.8,679.5 197.9,682.2 202.1,683.2 206.2,681.8 214.4,682.2 221.6,683.2 230.9,682.6 232.9,681.8 239.1,682.2 241.2,683.6 245.3,683.2 251.5,682.2 261.8,682.2 263.8,683.2 274.1,683.2 280.3,685.7 288.5,686.3 296.8,686.9 302.9,685.7 312.2,686.3 316.3,685.3 321.5,683.6 329.7,683.2 340.0,683.2 342.1,684.9 346.2,683.9 358.5,683.2 366.8,682.2 378.2,683.4 380.3,682.4 405.0,682.4 407.1,681.3 409.1,682.8 423.5,682.8 431.8,681.3 437.9,679.3 442.1,680.3 448.2,679.3 456.5,678.2 460.6,677.2 464.7,678.2 468.8,681.3 472.9,682.4 485.3,682.8 488.4,684.0 493.5,682.4 501.8,681.3 505.9,679.3 514.1,677.2 522.4,675.1 532.6,674.1 534.7,673.7 540.9,677.8 547.1,677.2 555.3,676.2 563.5,675.8 567.6,676.2 573.8,674.1 586.2,670.0 594.4,667.5 602.6,666.9 612.9,667.9 615.0,667.9 623.2,666.9 633.5,665.9 637.6,664.9 640.0,665.5 648.2,662.8 660.6,662.8 670.9,664.2 681.2,662.8 689.4,661.8 701.8,660.7 714.1,659.3 718.2,659.7 722.4,661.1 726.5,660.1 732.6,662.8 738.8,661.8 747.1,663.8 758.4,664.2 761.5,666.9 767.6,669.0 775.9,670.0 784.1,672.1 792.4,672.5 800.6,674.1 806.8,673.1 817.1,673.1 825.3,671.6 829.4,670.0 835.6,670.0 843.8,672.1 847.9,671.0 858.2,667.9 866.5,666.9 874.7,664.9 882.9,661.8 891.2,658.7 899.4,656.0 907.6,653.9 914.4,653.6 921.0,651.8 927.6,650.7 932.1,650.1 954.1,650.1 956.3,648.5 965.1,648.5 968.5,647.4 976.2,646.8 978.4,647.4 989.4,648.1 991.6,647.4 1004.9,647.4 1007.1,649.0 1013.7,649.6 1015.9,651.2 1019.2,649.6 1022.5,651.2 1042.4,651.2 1044.6,652.3 1046.8,650.3 1060.0,650.3 1062.2,649.0 1081.0,649.0 1083.2,647.9 1108.5,647.9 1112.9,649.2 1116.2,649.0 1119.6,647.4 1124.0,646.8 1128.4,648.1 1135.0,646.8 1146.0,646.8 1148.2,645.9 1154.9,645.2 1182.4,645.2 1185.7,646.3 1201.2,646.3 1204.5,645.2" fill="none" stroke="#c010c0" stroke-width="2"/>
<rect x="100.5" y="703" width="1104.5" height="2.2" fill="#ff0000"/>
<text x="9.2" y="439.2" fill="#ff0000" font-size="16" textLength="31.3" lengthAdjust="spacingAndGlyphs" font-family="'Liberation Sans', sans-serif">luvia</text>
<rect x="4" y="438" width="5" height="1.2" fill="#ff0000"/>
<text x="191.5" y="438.9" fill="#7878ff" font-size="16" textLength="68.0" lengthAdjust="spacingAndGlyphs" font-family="'Liberation Sans', sans-serif" >Humedad</text>
<text x="897" y="438.9" fill="#00ff00" font-size="16" textLength="91" lengthAdjust="spacingAndGlyphs" font-family="'Liberation Sans', sans-serif" >Temperatura</text>
<text x="1134.5" y="438.9" fill="#ff00ff" font-size="16" textLength="78.0" lengthAdjust="spacingAndGlyphs" font-family="'Liberation Sans', sans-serif" >Punto rocío</text>
</svg></body></html>
